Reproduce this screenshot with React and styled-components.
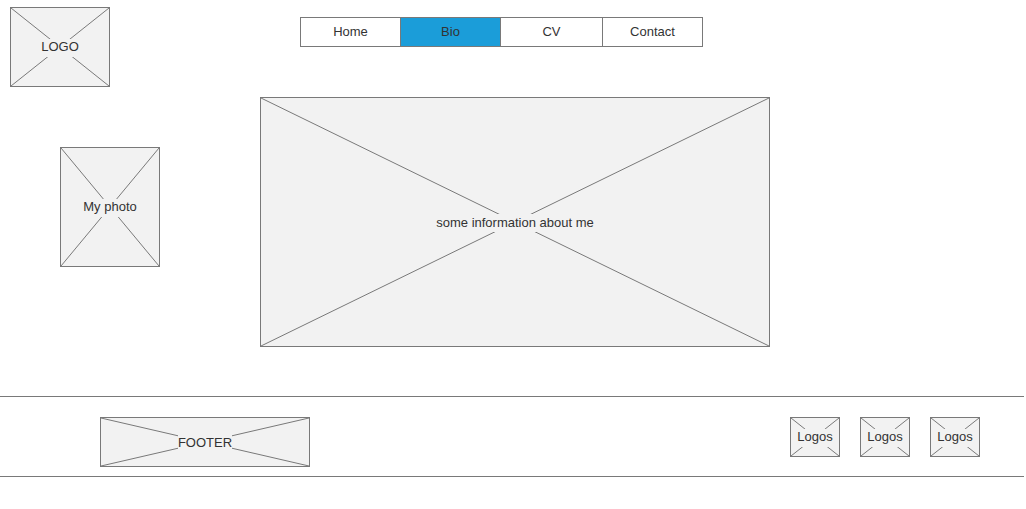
import React from "react";
import styled, { createGlobalStyle } from "styled-components";

const line = "#797979";

const GlobalStyle = createGlobalStyle`
  * { box-sizing: border-box; }
  body {
    margin: 0;
    background: #fff;
    color: #333;
    font: 13px/16px "Liberation Sans", Arial, sans-serif;
  }
`;

const Page = styled.div`
  padding-right: 2px;
`;

const Header = styled.header`
  display: flex;
  align-items: flex-start;
  padding: 7px 10px 10px;
`;

const Nav = styled.nav`
  display: grid;
  grid-template-columns: 100px 100px 102px 100px;
  margin: 10px 0 0 190px;
  border: 1px solid ${line};
  border-right: 0;
`;

const NavLink = styled.a`
  height: 28px;
  padding: 6px 0;
  text-align: center;
  text-decoration: none;
  color: inherit;
  border-right: 1px solid ${line};
  background: ${(p) => (p["aria-current"] ? "#1b9dd9" : "#fff")};
`;

const Main = styled.main`
  display: flex;
  align-items: flex-start;
  gap: 100px;
  padding: 0 254px 49px 60px;
`;

const PhotoColumn = styled.div`
  padding-top: 50px;
`;

const Footer = styled.footer`
  display: flex;
  justify-content: space-between;
  align-items: flex-start;
  padding: 20px 44px 9px 100px;
  border: solid ${line};
  border-width: 1px 0;
`;

const LogoList = styled.div`
  display: flex;
  gap: 20px;
`;

const Frame = styled.div`
  position: relative;
  display: flex;
  align-items: center;
  justify-content: center;
  width: ${(p) => (p.$width ? `${p.$width}px` : "auto")};
  flex: ${(p) => (p.$width ? "none" : "1")};
  height: ${(p) => p.$height}px;
  padding-top: 2px;
  border: 1px solid ${line};
  background: #f2f2f2;
`;

const Cross = styled.svg`
  position: absolute;
  inset: 0;
  width: 100%;
  height: 100%;
  stroke: ${line};
`;

const Label = styled.span`
  position: relative;
  padding: ${(p) => (p.$centered ? "1px 0" : "0 0 2px")};
  background: #f2f2f2;
  white-space: nowrap;
`;

function Placeholder({ label, width, height, centered }) {
  return (
    <Frame $width={width} $height={height}>
      <Cross aria-hidden="true">
        <line x1="0" y1="0" x2="100%" y2="100%" />
        <line x1="0" y1="100%" x2="100%" y2="0" />
      </Cross>
      <Label $centered={centered}>{label}</Label>
    </Frame>
  );
}

export default function App() {
  return (
    <Page>
      <GlobalStyle />
      <Header>
        <Placeholder label="LOGO" width={100} height={80} />
        <Nav aria-label="Main">
          <NavLink href="#home">Home</NavLink>
          <NavLink href="#bio" aria-current="page">Bio</NavLink>
          <NavLink href="#cv">CV</NavLink>
          <NavLink href="#contact">Contact</NavLink>
        </Nav>
      </Header>
      <Main>
        <PhotoColumn>
          <Placeholder label="My photo" width={100} height={120} />
        </PhotoColumn>
        <Placeholder label="some information about me" height={250} centered />
      </Main>
      <Footer>
        <Placeholder label="FOOTER" width={210} height={50} centered />
        <LogoList>
          <Placeholder label="Logos" width={50} height={40} />
          <Placeholder label="Logos" width={50} height={40} />
          <Placeholder label="Logos" width={50} height={40} />
        </LogoList>
      </Footer>
    </Page>
  );
}
